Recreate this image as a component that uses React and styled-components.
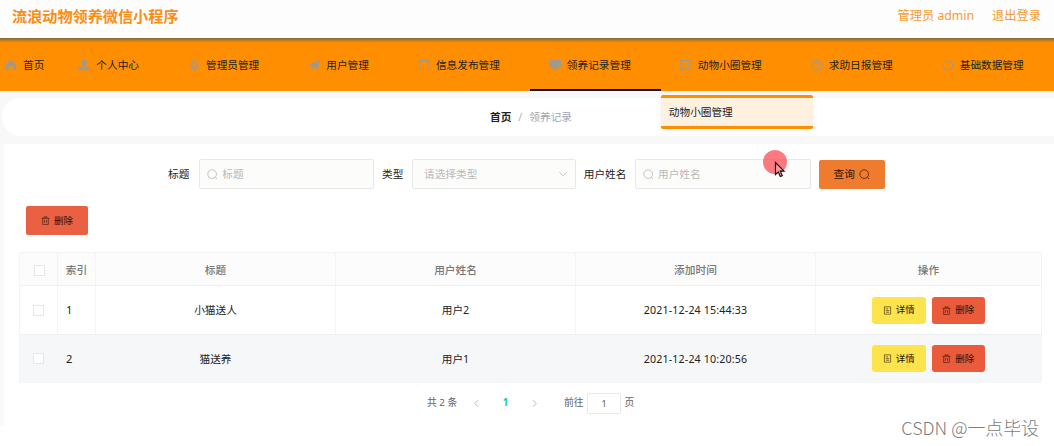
import styled, { createGlobalStyle, css } from "styled-components";

const GlobalStyle = createGlobalStyle`
  * {
    box-sizing: border-box;
  }
  body {
    margin: 0;
    overflow: hidden;
    background: #fff;
    color: #222;
    font-family: "Noto Sans", "Noto Sans CJK SC", sans-serif;
    font-size: 10.67px;
    line-height: 16px;
  }
`;

const paths = {
  home: <path d="M8 1 1 7v8h4V9.500h6V15h4V7z" fill="currentColor" stroke="none" />,
  user: (
    <g fill="currentColor" stroke="none">
      <circle cx="8" cy="4.800" r="3.800" />
      <path d="M0 15v-1c0-3 2.500-4 5-4h6c2.500 0 5 1 5 4v1z" />
    </g>
  ),
  mic: (
    <>
      <rect x="5" y="1" width="6" height="9.500" rx="3" />
      <path d="M2.500 7v1a5.500 5.500 0 0 0 11 0V7M8 13.500V16M8 4v3" />
    </>
  ),
  plane: (
    <path
      d="M0 8.500 16 1l-3 13-5-3-2.500 4v-5L12 4 4 10.500z"
      fill="currentColor"
      stroke="none"
    />
  ),
  box: <path d="M2.700 14V2h10.600v12zM0 14h16M1 2h14" />,
  monitor: (
    <path
      d="M1 1h14q1 0 1 1v10H10v2h2v1H4v-1h2v-2H0V2q0-1 1-1z"
      fill="currentColor"
      stroke="none"
    />
  ),
  chat: (
    <path d="M1 2h14v11H5l-2 2v-2H1zM4 7.500h1.500M7.200 7.500h1.500M10.500 7.500H12" />
  ),
  help: (
    <>
      <circle cx="8" cy="8" r="7" />
      <path d="M5.500 6.500C5.500 3 10.500 3 10.500 6.200 10.500 8 8 8 8 10M8 11.500V13" />
    </>
  ),
  power: <path d="M5 2.200a6.500 6.500 0 1 0 6 0M8 .5V7" />,
  search: (
    <>
      <circle cx="7.500" cy="7.500" r="6.300" />
      <path d="m12 12 2.500 2.500" />
    </>
  ),
  trash: (
    <path d="M1 4h14M5.500 4V1.500h5V4M3 4v11h10V4M6.200 7v5M9.800 7v5" />
  ),
  doc: <path d="M2.500 1.500h11v13h-11zM5 5h4M5 8h6M5 11h6" />,
  down: <path d="m2 5 6 6 6-6" />,
  left: <path d="M11 2 5 8l6 6" />,
  right: <path d="m5 2 6 6-6 6" />,
};

const Icon = ({ name, size = 12, stroke = 1.2, className }) => (
  <Svg
    className={className}
    width={size}
    height={size}
    viewBox="0 0 16 16"
    strokeWidth={stroke}
  >
    {paths[name]}
  </Svg>
);

const menus = [
  { icon: "home", text: "首页", plain: true },
  { icon: "user", text: "个人中心" },
  { icon: "mic", text: "管理员管理" },
  { icon: "plane", text: "用户管理" },
  { icon: "box", text: "信息发布管理" },
  { icon: "monitor", text: "领养记录管理", active: true },
  { icon: "chat", text: "动物小圈管理", child: "动物小圈管理" },
  { icon: "help", text: "求助日报管理" },
  { icon: "power", text: "基础数据管理" },
];

const rows = [
  { id: 1, title: "小猫送人", user: "用户2", time: "2021-12-24 15:44:33" },
  { id: 2, title: "猫送养", user: "用户1", time: "2021-12-24 10:20:56" },
];

const App = () => {
  return (
    <Page>
      <GlobalStyle />
      <Header>
        <Title>流浪动物领养微信小程序</Title>
        <HeaderLinks>
          <span>管理员 admin</span>
          <span>退出登录</span>
        </HeaderLinks>
      </Header>

      <Nav>
        {menus.map(item => (
          <NavItem key={item.text} $active={item.active} $plain={item.plain}>
            <NavIcon name={item.icon} stroke={1.4} />
            <span>{item.text}</span>
            {item.plain ? null : <NavArrow name="down" size={8} />}
            {item.child ? <SubMenu>{item.child}</SubMenu> : null}
          </NavItem>
        ))}
      </Nav>

      <Breadcrumb>
        <b>首页</b>
        <i>/</i>
        <span>领养记录</span>
      </Breadcrumb>

      <Content>
        <SearchForm>
          <label>标题</label>
          <Field $width={175}>
            <Icon name="search" size={11} />
            标题
          </Field>
          <label>类型</label>
          <Field $width={164} $select>
            请选择类型
            <Icon name="down" size={10} />
          </Field>
          <label>用户姓名</label>
          <Field $width={176}>
            <Icon name="search" size={11} />
            用户姓名
          </Field>
          <QueryButton>
            查询
            <Icon name="search" size={11} stroke={1} />
          </QueryButton>
        </SearchForm>

        <DeleteButton>
          <Icon name="trash" size={9} stroke={1} />
          删除
        </DeleteButton>

        <Table>
          <HeadRow>
            <Cell>
              <Checkbox $head />
            </Cell>
            <Cell>索引</Cell>
            <Cell>标题</Cell>
            <Cell>用户姓名</Cell>
            <Cell>添加时间</Cell>
            <Cell>操作</Cell>
          </HeadRow>
          {rows.map((row, i) => (
            <Row key={row.id} $striped={i % 2 === 1}>
              <Cell>
                <Checkbox />
              </Cell>
              <Cell $left>{row.id}</Cell>
              <Cell>{row.title}</Cell>
              <Cell>{row.user}</Cell>
              <Cell>{row.time}</Cell>
              <Cell>
                <RowButton $color="#fde44d">
                  <Icon name="doc" size={9} stroke={1} />
                  详情
                </RowButton>
                <RowButton $color="#e95b3b">
                  <Icon name="trash" size={9} stroke={1} />
                  删除
                </RowButton>
              </Cell>
            </Row>
          ))}
        </Table>

        <Pagination>
          <Total>共 2 条</Total>
          <Icon name="left" size={9} stroke={1.5} />
          <Current>1</Current>
          <Icon name="right" size={9} stroke={1.5} />
          <Jump>
            前往
            <PageInput>1</PageInput>
            页
          </Jump>
        </Pagination>
      </Content>

      <Pointer>
        <svg width="12" height="18" viewBox="0 0 12 18">
          <path
            d="M1.500 1.500v12l2.800-2.600 2 4.600 2-.9-2-4.400H10z"
            fill="#f5a0a0"
            stroke="#2b0a0c"
            strokeWidth="1.200"
          />
        </svg>
      </Pointer>
      <Watermark>CSDN @一点毕设</Watermark>
    </Page>
  );
};

export default App;

const Svg = styled.svg`
  display: block;
  flex: none;
  fill: none;
  stroke: currentColor;
`;

const Page = styled.div`
  position: relative;
  width: 1054px;
  height: 446px;
  overflow: hidden;
`;

const Header = styled.header`
  display: flex;
  justify-content: space-between;
  height: 38px;
  padding: 5px 13px 0 12px;
  background: #fdfdfd;
  color: #f39a33;
`;

const Title = styled.div`
  color: #fb8c14;
  font-size: 15.15px;
  font-weight: bold;
  line-height: 23px;
`;

const HeaderLinks = styled.div`
  display: flex;
  gap: 18px;
  font-size: 12.25px;
  line-height: 22px;
`;

const Nav = styled.nav`
  display: flex;
  height: 53px;
  padding-top: 1px;
  background: linear-gradient(#7b6a49 0, #b87620 2px, #f48900 4px, #ff8f00 6px);

  & > :first-child {
    margin-left: -14px;
  }
`;

const NavItem = styled.div`
  position: relative;
  display: flex;
  flex: none;
  align-items: center;
  height: 52px;
  padding-top: 2px;
  padding-left: 18px;
  padding-right: ${props => (props.$plain ? 15 : 12)}px;
  border-bottom: 2px solid ${props => (props.$active ? "#1a0e00" : "transparent")};
  white-space: nowrap;
`;

const NavIcon = styled(Icon)`
  margin-right: 6px;
  margin-left: 1px;
  color: #a1998c;
`;

const NavArrow = styled(Icon)`
  margin-left: 10px;
  color: #e99a33;
  opacity: 0.6;
`;

const SubMenu = styled.div`
  position: absolute;
  z-index: 2;
  top: 56px;
  left: 0;
  width: 152px;
  height: 34px;
  padding-left: 8px;
  border-top: 3px solid #ff8f00;
  border-bottom: 3px solid #ff8f00;
  border-radius: 2px;
  background: #fff1e0;
  box-shadow: 0 1px 6px rgba(0, 0, 0, 0.06);
  line-height: 29px;
`;

const Breadcrumb = styled.div`
  display: flex;
  align-items: center;
  justify-content: center;
  height: 53px;
  padding-left: 6px;
  border: solid #f8f8f9;
  border-width: 7px 0 8px 2px;
  background:
    radial-gradient(circle at 19px 19px, #fff 18.500px, #f8f8f9 19.500px) 0 0 / 19px 38px no-repeat,
    #fff;

  b {
    font-weight: 600;
  }
  i {
    margin: 0 7px;
    color: #aab0ba;
    font-style: normal;
  }
  span {
    color: #9da6b4;
  }
`;

const Content = styled.main`
  height: 282px;
  padding: 15px 12px 0 15px;
  border-left: 4px solid #f8f9fb;
  background: #fff;
`;

const SearchForm = styled.div`
  display: flex;
  align-items: center;
  height: 30px;
  margin-left: 149px;

  label {
    margin-right: 8.7px;
  }
  label:first-child {
    margin-right: 10px;
  }
`;

const Field = styled.div`
  display: flex;
  align-items: center;
  gap: 4px;
  width: ${props => props.$width}px;
  height: 30px;
  margin-right: 7.7px;
  padding: 0 8px 0 7px;
  border: 1px solid #e8e8e8;
  border-radius: 2px;
  background: #fcfcfb;
  color: #b9b9b9;

  ${props =>
    props.$select &&
    css`
      justify-content: space-between;
      padding: 0 7px 0 11px;
    `}
`;

const Button = styled.div`
  display: flex;
  align-items: center;
  justify-content: center;
  gap: 4px;
  border-radius: 2px;
  color: #2b1008;
`;

const QueryButton = styled(Button)`
  width: 66px;
  height: 29px;
  background: #ef7c2e;
`;

const DeleteButton = styled(Button)`
  width: 62px;
  height: 29px;
  margin: 17px 0 17px 7px;
  background: #e96042;
  font-size: 9.5px;
`;

const Table = styled.div`
  width: 1023px;
  border: 1px solid #f3f4f5;
  border-bottom: 0;
`;

const Row = styled.div`
  display: grid;
  grid-template-columns: 38px 38px 240px 240px 240px 1fr;
  height: 48.5px;
  border-bottom: 1px solid ${props => (props.$striped ? "#f6f7f9" : "#eff0f2")};
  background: ${props => (props.$striped ? "#f6f7f9" : "#fff")};

  & > div {
    border-color: ${props => (props.$striped ? "transparent" : "#f4f4f5")};
  }
`;

const HeadRow = styled(Row)`
  height: 33px;
  background: #fcfcfc;
  color: #777;
  font-weight: 500;

  & > div {
    padding-top: 2px;
  }
`;

const Cell = styled.div`
  display: flex;
  align-items: center;
  justify-content: ${props => (props.$left ? "flex-start" : "center")};
  gap: 6px;
  padding-top: 1px;
  padding-left: ${props => (props.$left ? 8 : 0)}px;
  border-right: 1px solid;
  font-size: ${props => (props.$left ? 11.2 : 10.67)}px;

  &:nth-child(5) {
    letter-spacing: 0.14px;
  }
  &:last-child {
    border-right: 0;
  }
`;

const Checkbox = styled.div`
  width: 11px;
  height: 11px;
  margin-left: ${props => (props.$head ? 2 : -1)}px;
  border: 1px solid #e6e7e9;
  background: #fff;
`;

const RowButton = styled(Button)`
  width: 53.5px;
  height: 27px;
  border-radius: 3px;
  background: ${props => props.$color};
  font-size: 9.5px;
`;

const Pagination = styled.div`
  display: flex;
  align-items: center;
  height: 22px;
  margin: 9px 0 0 408px;
  color: #666;
  font-size: 9.8px;

  svg {
    color: #b0b0b0;
  }
`;

const Total = styled.span`
  width: 45px;
`;

const Current = styled.span`
  width: 49px;
  color: #22c59b;
  font-weight: bold;
  text-align: center;
`;

const Jump = styled.div`
  display: flex;
  align-items: center;
  gap: 3.5px;
  margin-left: 25px;
`;

const PageInput = styled.div`
  width: 34px;
  height: 21px;
  border: 1px solid #e8e9ec;
  border-radius: 2px;
  line-height: 20px;
  text-align: center;
`;

const Pointer = styled.div`
  position: absolute;
  z-index: 3;
  top: 150px;
  left: 763px;
  width: 24px;
  height: 24px;
  padding: 11px 0 0 11px;
  border-radius: 50%;
  background: rgba(252, 78, 86, 0.75);
`;

const Watermark = styled.div`
  position: absolute;
  right: 15px;
  bottom: 6px;
  color: #7c7c7c;
  font-family: "Noto Sans CJK SC", sans-serif;
  font-size: 17.9px;
  font-weight: 300;
  line-height: 26px;
  text-shadow: 1px 1px 0 #fff;
`;
